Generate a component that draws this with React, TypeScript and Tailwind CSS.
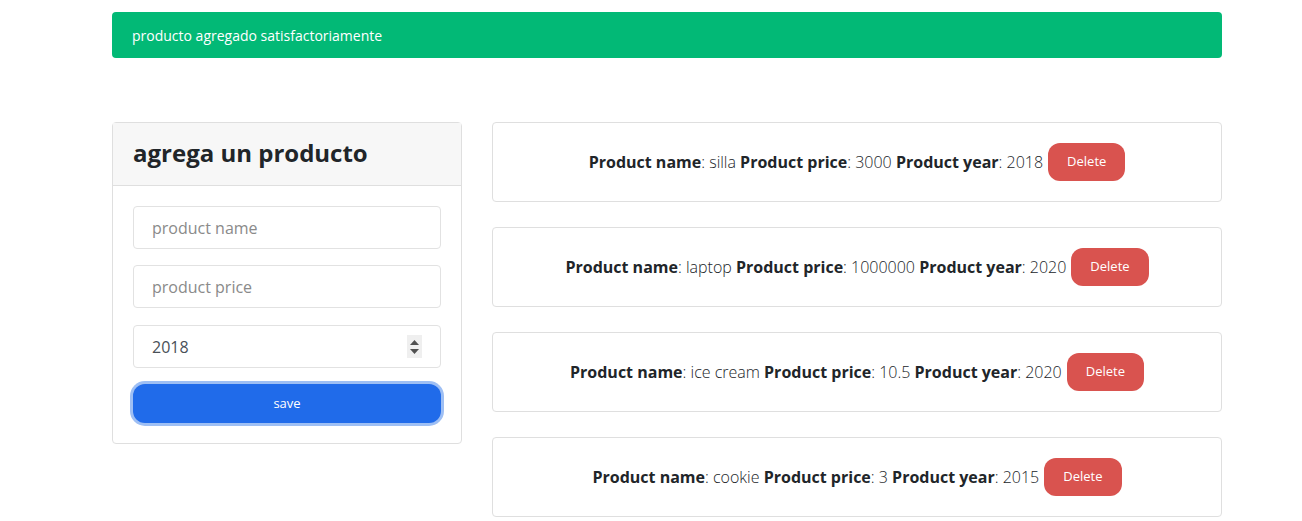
import { useState } from "react";

const products = [
  { name: "silla", price: "3000", year: "2018" },
  { name: "laptop", price: "1000000", year: "2020" },
  { name: "ice cream", price: "10.5", year: "2020" },
  { name: "cookie", price: "3", year: "2015" },
];

function Spinner() {
  return (
    <div className="absolute right-[19px] top-[10px] flex h-[23px] w-[15px] flex-col items-center justify-center gap-[4px] bg-[#efefef]">
      <svg width="9" height="5" viewBox="0 0 9 5">
        <path d="M4.5 0 L9 5 L0 5 Z" fill="#505050" />
      </svg>
      <svg width="9" height="5" viewBox="0 0 9 5">
        <path d="M0 0 L9 0 L4.5 5 Z" fill="#505050" />
      </svg>
    </div>
  );
}

export default function App() {
  const [year, setYear] = useState("2018");

  return (
    <div className="min-h-screen bg-white font-['Open_Sans',sans-serif] text-[#212529]">
      <div className="ml-[112px] w-[1110px] pt-[12px]">
        <div className="flex h-[46px] items-center rounded-[4px] bg-[#02b976] px-5 text-[14px] text-white">
          producto agregado satisfactoriamente
        </div>

        <div className="mt-[64px] flex gap-[30px]">
          <div className="h-fit w-[350px] rounded-[4px] border border-[#dfdfdf]">
            <div className="flex h-[63px] items-center border-b border-[#dfdfdf] bg-[#f7f7f7] px-5 pb-[3px]">
              <h3 className="text-[24px] font-bold text-[#212529]">agrega un producto</h3>
            </div>
            <div className="flex flex-col p-5">
              <input
                placeholder="product name"
                className="mb-[16px] h-[43px] rounded-[4px] border border-[#e2e2e2] px-[18px] text-[16px] placeholder:text-[#8a8a8a] outline-none"
              />
              <input
                placeholder="product price"
                className="mb-[17px] h-[43px] rounded-[4px] border border-[#e2e2e2] px-[18px] text-[16px] placeholder:text-[#8a8a8a] outline-none"
              />
              <div className="relative mb-[16px]">
                <input
                  value={year}
                  onChange={(e) => setYear(e.target.value)}
                  className="h-[43px] w-full rounded-[4px] border border-[#e2e2e2] px-[18px] text-[16px] text-[#495057] outline-none"
                />
                <Spinner />
              </div>
              <button className="h-[39px] rounded-[12px] bg-[#206bea] text-[13px] text-white ring-[3px] ring-[#9ebff4]">
                save
              </button>
            </div>
          </div>

          <div className="flex w-[730px] flex-col gap-[25px]">
            {products.map((p) => (
              <div
                key={p.name}
                className="flex h-[80px] items-center justify-center gap-[5px] rounded-[4px] border border-[#dfdfdf] text-[16px]"
              >
                <span className="font-light">
                  <b className="font-bold">Product name</b>: {p.name}{" "}
                  <b className="font-bold">Product price</b>: {p.price}{" "}
                  <b className="font-bold">Product year</b>: {p.year}
                </span>
                <button className="h-[38px] rounded-[12px] bg-[#d9534f] px-[19px] text-[13px] text-white">
                  Delete
                </button>
              </div>
            ))}
          </div>
        </div>
      </div>
    </div>
  );
}
